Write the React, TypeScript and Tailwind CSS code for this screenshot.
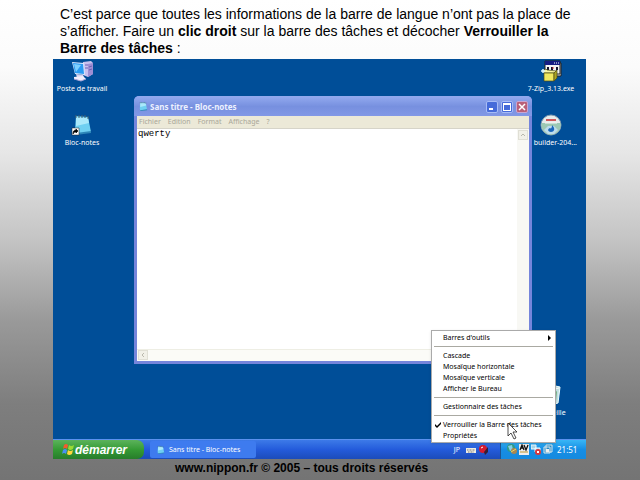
import type { ReactNode } from "react";

const ui = "font-['Noto_Sans','Open_Sans',sans-serif]";

function Monitor() {
  return (
    <svg viewBox="0 0 24 22" className="h-[22px] w-6" aria-hidden="true">
      <path d="M13 2l8-1 2 2v11l-5 3-5-2z" fill="#c9c0ee" />
      <path d="M18 4l5-1v11l-5 3z" fill="#9e8ed4" />
      <path d="M15 5h3M15 8h3M19 7l3-1M19 10l3-1" stroke="#6c5fb4" />
      <path d="M2 2l12 1 1 12-10-1z" fill="#d7e6fc" />
      <path d="M3 3l10 1 1 10-9-1z" fill="#2a9af2" />
      <path d="M4 4l7 1-5 7z" fill="#7dd0ff" />
      <path d="M6 14l7 1 1 3H7z" fill="#d6d1ee" />
      <path d="M4 17l9-1 3 3-5 2-7-2z" fill="#f1eefc" />
      <path d="M4 19l7 2 5-2" fill="none" stroke="#aaa4d8" />
    </svg>
  );
}

function Notepad({ shortcut = false, className }: { shortcut?: boolean; className: string }) {
  return (
    <svg viewBox="0 0 22 22" className={className} aria-hidden="true">
      <path d="M5 2l12 1 3 15-15 2-1-4z" fill="#6fd0f2" />
      <path d="M5 3l12 1 1 5-13 3z" fill="#aae9fb" />
      <path d="M5 19l15-2v2L5 21z" fill="#2d86b8" />
      <path d="M5 1v3M8 1v3M11 1v3M14 1v3M17 2v3" stroke="#44616d" />
      {shortcut && (
        <>
          <path d="M1 14h7v7H1z" fill="#fff" stroke="#222" strokeWidth=".5" />
          <path d="M2 20c0-3 1-4 3-4v-1l2 2-2 2v-1c-1 0-2 0-3 2z" fill="#000" stroke="#000" strokeWidth=".6" />
        </>
      )}
    </svg>
  );
}

function Zip() {
  return (
    <svg viewBox="0 0 22 22" className="h-[22px] w-[22px]" aria-hidden="true">
      <path d="M7 3h14v13H7z" fill="#e8e8e8" stroke="#222" />
      <path d="M5 1h15v13H5z" fill="#f4f4f4" stroke="#222" />
      <path d="M5 1h15v4H5z" fill="#151d83" />
      <path d="M14 3h1M16 3h1M18 3h1" stroke="#fff" />
      <path d="M8 7v3M12 7v3M17 7v3" stroke="#141430" strokeWidth="2" />
      <path d="M12 8h2" stroke="#c33" />
      <path d="M2 11l4-2 1 1 10 1-3 2H4z" fill="#fbf7a2" stroke="#454510" strokeWidth=".7" />
      <path d="M4 13h10v8H4z" fill="#f0e860" stroke="#4d4a12" strokeWidth=".7" />
      <path d="M14 13l3-3v8l-3 3z" fill="#aaa324" stroke="#4d4a12" strokeWidth=".7" />
      <path d="M3 9v4M1 11h4" stroke="#d8f4ff" strokeWidth="1.5" />
    </svg>
  );
}

function Disc() {
  return (
    <svg viewBox="0 0 22 22" className="h-[22px] w-[22px]" aria-hidden="true">
      <circle cx="11" cy="11" r="10" fill="#e6eceb" stroke="#829bb0" />
      <path d="M1.500 9h19a9.500 9.500 0 0 1-19 4z" fill="#9cc9b4" />
      <path d="M4 16l4-4 6 0 4 4-4 4H8z" fill="#bcdcec" />
      <path d="M6 5h10v2H6z" fill="#ce5759" />
      <path d="M5 9h12" stroke="#f2f7f5" />
      <path d="M12 11c4 4 2 7-1 7s-4-3-1-4c1 1 2 0 2-3z" fill="#1967bb" />
    </svg>
  );
}

function Bin() {
  return (
    <svg viewBox="0 0 22 22" className="h-[22px] w-[22px]" aria-hidden="true">
      <path d="M2 3l9-2 9 2-2 16-7 2-7-2z" fill="#c4e2e4" stroke="#f1ffff" />
      <path d="M17 7l-1 10-4 1 1-8z" fill="#6fb37c" />
      <path d="M4 4l7 2 8-2" fill="none" stroke="#fff" />
    </svg>
  );
}

function Flag() {
  return (
    <svg viewBox="0 0 14 13" className="h-[13px] w-[14px]" aria-hidden="true">
      <path d="M3 2q2-2 4 0L6 6Q4 4 2 6z" fill="#f35b2e" />
      <path d="M8 2q2 2 5 0l-1 4q-3 2-5 0z" fill="#9ad936" />
      <path d="M2 7q2-2 4 0l-1 4q-2-2-4 0z" fill="#4890f5" />
      <path d="M7 7q2 2 5 0l-1 4q-3 2-5 0z" fill="#ffd63d" />
    </svg>
  );
}

function DesktopIcon({ icon, label, end = false }: { icon: ReactNode; label: string; end?: boolean }) {
  return (
    <button className={`flex w-16 flex-col items-center gap-[2px] whitespace-nowrap text-[7px] leading-[10px] text-white ${ui}`}>
      {icon}
      <span className={end ? "w-[52px] text-right" : ""}>{label}</span>
    </button>
  );
}

function MenuItem({ children, checked = false, arrow = false }: { children: ReactNode; checked?: boolean; arrow?: boolean }) {
  return (
    <button role="menuitem" className="flex h-[11px] w-full items-center whitespace-nowrap pr-1 text-left">
      <span className="flex w-[11px] justify-center">
        {checked && (
          <svg viewBox="0 0 6 6" className="h-[6px] w-[6px]" aria-hidden="true"><path d="M0 2l2 2 4-4v2L2 6 0 4z" /></svg>
        )}
      </span>
      <span className="flex-1">{children}</span>
      {arrow && <svg viewBox="0 0 3 6" className="h-[6px] w-[3px]" aria-hidden="true"><path d="M0 0l3 3-3 3z" /></svg>}
    </button>
  );
}

const Rule = () => <hr className="mx-[2px] my-[3px] border-t border-[#aaa9a2]" />;

function Scroll({ up = false }: { up?: boolean }) {
  return (
    <button aria-label={up ? "Défiler vers le haut" : "Défiler vers la gauche"} className="flex h-[10px] w-[10px] items-center justify-center border border-[#e0dfd5] bg-[#f1f0e8]">
      <svg viewBox="0 0 6 6" className="h-[6px] w-[6px]"><path d={up ? "M1 4l2-2 2 2" : "M4 1L2 3l2 2"} fill="none" stroke="#b9b8ad" /></svg>
    </button>
  );
}

function NotepadWindow() {
  return (
    <section className="flex h-[268px] flex-col rounded-t-[5px] bg-[#7585db] px-[3px] pb-[3px]">
      <header className="-mx-[3px] flex h-5 shrink-0 items-center gap-[2px] rounded-t-[5px] border-t border-[#91a8ee] bg-linear-to-b from-[#91a8ee] via-[#7790df] to-[#8298e6] px-1">
        <Notepad className="h-[11px] w-[10px]" />
        <h1 className={`flex-1 text-[8px] font-bold leading-3 text-[#edf1ff] ${ui}`}>Sans titre - Bloc-notes</h1>
        <div className="flex gap-[3px]">
          <button aria-label="Réduire" className="flex h-3 w-3 items-end rounded-[2px] border border-[#a7bcf6] bg-[#466bd9] p-[2px]"><span className="h-[2px] w-1 bg-white" /></button>
          <button aria-label="Agrandir" className="h-3 w-3 rounded-[2px] border border-[#a7bcf6] bg-[#466bd9] p-[1px]"><span className="block h-2 w-2 border border-t-2 border-white" /></button>
          <button aria-label="Fermer" className="flex h-3 w-3 items-center justify-center rounded-[2px] border border-[#c9a5d2] bg-[#b96079]"><svg viewBox="0 0 8 8" className="h-2 w-2"><path d="M1 1l6 6M7 1L1 7" stroke="#fff" strokeWidth="1.5" /></svg></button>
        </div>
      </header>
      <nav className={`flex h-[13px] shrink-0 items-center gap-[7px] border-b border-[#d6d4c9] bg-[#ece9d8] px-[2px] text-[7px] leading-[10px] text-[#a9a799] ${ui}`}>
        <button>Fichier</button><button>Edition</button><button>Format</button><button>Affichage</button><button>?</button>
      </nav>
      <div className="flex min-h-0 flex-1 bg-white">
        <textarea aria-label="Texte" defaultValue="qwerty" className="min-w-0 flex-1 resize-none bg-white px-[1px] font-['Liberation_Mono',monospace] text-[9px] leading-[11px] text-black outline-none" />
        <div className="w-3 bg-[#f8f8f4] p-[1px]"><Scroll up /></div>
      </div>
      <div className="h-3 shrink-0 border-t border-[#eeeee4] bg-[#fbfbf7] px-[1px]"><Scroll /></div>
    </section>
  );
}

function Tray() {
  return (
    <div className="flex h-full w-[86px] items-center gap-[2px] border-l border-[#20538f] bg-linear-to-b from-[#38b6f5] via-[#168ee5] to-[#158adf] pl-[6px]">
      <svg viewBox="0 0 10 11" className="h-[11px] w-[10px]" aria-hidden="true"><circle cx="4" cy="4" r="4" fill="#329c84" /><path d="M1 2l4-1 1 5-3 1z" fill="#87d0e8" /><circle cx="7" cy="7" r="3" fill="#a88650" /><path d="M4 8l5-3" stroke="#e7d66b" /></svg>
      <svg viewBox="0 0 10 11" className="h-[11px] w-[10px]" aria-hidden="true"><path d="M0 0h10v11H0z" fill="#eee" /><path d="M1 6l2-5 2 5M2 4h2M5 1l2 5 2-5" fill="none" stroke="#111" strokeWidth="1.3" /><path d="M1 8h8" stroke="#bd9831" /></svg>
      <svg viewBox="0 0 10 11" className="h-[11px] w-[10px]" aria-hidden="true"><path d="M0 1h5v4H0zM4 4h5v4H4z" fill="#a5d5e8" stroke="#eef8ff" /><circle cx="7" cy="8" r="3" fill="#db363c" /><path d="M6 7l2 2M8 7L6 9" stroke="#fff" /></svg>
      <svg viewBox="0 0 10 11" className="h-[11px] w-[10px]" aria-hidden="true"><path d="M3 1h6v7H3zM1 3h6v6H1z" fill="#278bc7" stroke="#d9e7ec" /><path d="M3 5h3v3H3z" fill="#eee" /></svg>
      <time className={`pl-[2px] text-[8px] leading-[10px] text-white ${ui}`}>21:51</time>
    </div>
  );
}

export default function App() {
  return (
    <main className="flex min-h-screen flex-col bg-[linear-gradient(to_bottom,#fff_0%,#fbfbfb_14%,#e6e6e6_32%,#c4c4c4_50%,#999_67%,#7e7e7e_84%,#747474_100%)] text-black">
      <p className="pl-[60px] pr-10 pt-[6px] font-['Liberation_Sans',Arial,sans-serif] text-[14px] leading-[17px]">
        C’est parce que toutes les informations de la barre de langue n’ont pas la place de<br />
        s’afficher. Faire un <strong>clic droit</strong> sur la barre des tâches et décocher <strong>Verrouiller la<br />Barre des tâches</strong> :
      </p>
      <div className="relative ml-[53px] mr-[54px] mt-[2px] flex h-[400px] flex-col overflow-hidden bg-[#004e98]">
        <div className="absolute -left-[3px] top-[1px] flex flex-col gap-5"><DesktopIcon icon={<Monitor />} label="Poste de travail" /><DesktopIcon icon={<Notepad shortcut className="h-[22px] w-[22px]" />} label="Bloc-notes" /></div>
        <div className="absolute right-[3px] top-[1px] flex flex-col gap-5"><DesktopIcon icon={<Zip />} label="7-Zip_3.13.exe" /><DesktopIcon icon={<Disc />} label="builder-204..." end /></div>
        <div className="absolute bottom-[41px] right-[3px]"><DesktopIcon icon={<Bin />} label="Corbeille" /></div>
        <div className="absolute left-[81px] right-[54px] top-[37px]"><NotepadWindow /></div>
        <footer className="mt-auto flex h-5 items-stretch border-t border-[#5a91ef] bg-linear-to-b from-[#3d7ae8] via-[#245bdb] to-[#1c4cba] text-white">
          <button className="flex w-[91px] items-center rounded-r-[7px] bg-linear-to-b from-[#5bb35b] via-[#359b35] to-[#277d2b] pl-2 font-['Liberation_Sans',Arial,sans-serif] text-[12px] font-bold italic leading-4"><Flag />démarrer</button>
          <button className={`my-[1px] ml-[6px] flex w-[106px] items-center gap-1 whitespace-nowrap rounded-[2px] bg-[#3e7bef] px-[6px] text-[7px] leading-[10px] ${ui}`}><Notepad className="h-[10px] w-[9px]" />Sans titre - Bloc-notes</button>
          <div className={`ml-auto flex items-center gap-[3px] pr-[10px] text-[7px] leading-[10px] ${ui}`}>
            <span className="pr-[3px]">JP</span>
            <svg viewBox="0 0 10 6" className="h-[6px] w-[10px]" aria-hidden="true"><path d="M0 1h10v5H0z" fill="#eeece2" /><path d="M1 3h8M2 5h6" stroke="#777" strokeDasharray="1 .5" /></svg>
            <svg viewBox="0 0 11 11" className="h-[11px] w-[11px]" aria-hidden="true"><circle cx="4" cy="5" r="4" fill="#d51b31" /><path d="M5 8l4-5v5l-3 3z" fill="#351e35" /><path d="M2 4l2-1" stroke="#fff" /></svg>
          </div>
          <Tray />
        </footer>
        <div role="menu" className={`absolute bottom-4 right-[30px] w-[125px] border border-[#aaa] bg-white py-[1px] text-[7px] leading-[11px] shadow-sm ${ui}`}>
          <MenuItem arrow>Barres d'outils</MenuItem><Rule />
          <MenuItem>Cascade</MenuItem><MenuItem>Mosaïque horizontale</MenuItem><MenuItem>Mosaïque verticale</MenuItem><MenuItem>Afficher le Bureau</MenuItem><Rule />
          <MenuItem>Gestionnaire des tâches</MenuItem><Rule />
          <MenuItem checked>Verrouiller la Barre des tâches</MenuItem><MenuItem>Propriétés</MenuItem>
        </div>
        <svg viewBox="0 0 11 18" className="absolute bottom-[19px] right-[68px] h-[18px] w-[11px]" aria-hidden="true"><path d="M1 1v13l3-3 3 6 2-1-3-6h4z" fill="#fff" stroke="#222" strokeWidth=".8" /></svg>
      </div>
      <p className="pl-[175px] font-['Liberation_Sans',Arial,sans-serif] text-[12px] font-bold leading-[18px]">www.nippon.fr © 2005 – tous droits réservés</p>
    </main>
  );
}
